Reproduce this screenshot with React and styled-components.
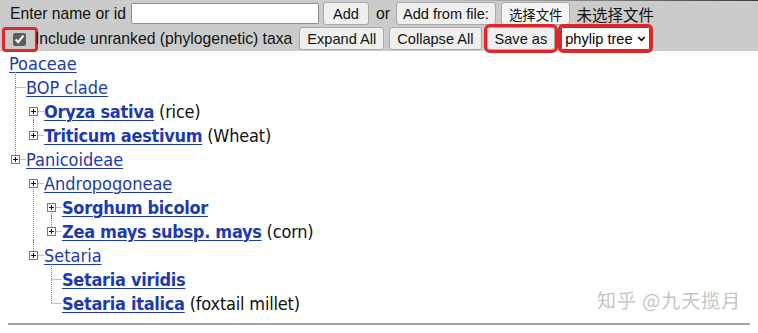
import React from "react";
import styled, { createGlobalStyle } from "styled-components";

const GlobalStyle = createGlobalStyle`
  body {
    margin: 0;
    background: #fff;
    font-family: "Liberation Sans", Arial, sans-serif;
  }
`;

const tree = {
  label: "Poaceae",
  children: [
    {
      label: "BOP clade",
      children: [
        { label: "Oryza sativa", note: "(rice)", bold: true, toggle: true },
        { label: "Triticum aestivum", note: "(Wheat)", bold: true, toggle: true },
      ],
    },
    {
      label: "Panicoideae",
      toggle: true,
      children: [
        {
          label: "Andropogoneae",
          toggle: true,
          children: [
            { label: "Sorghum bicolor", bold: true, toggle: true },
            { label: "Zea mays subsp. mays", note: "(corn)", bold: true, toggle: true },
          ],
        },
        {
          label: "Setaria",
          toggle: true,
          children: [
            { label: "Setaria viridis", bold: true },
            { label: "Setaria italica", note: "(foxtail millet)", bold: true },
          ],
        },
      ],
    },
  ],
};

function App() {
  return (
    <Page>
      <GlobalStyle />
      <Toolbar>
        <ToolRow>
          <Label $ml={10}>Enter name or id</Label>
          <TextInput $ml={5} />
          <Button $ml={4} $pad={9}>Add</Button>
          <Label $ml={7}>or</Label>
          <Button $ml={6} $pad={6}>Add from file:</Button>
          <Button $ml={5} $cjk>选择文件</Button>
          <Label $ml={6} $cjk>未选择文件</Label>
        </ToolRow>
        <ToolRow>
          <CheckWrap $marked>
            <Check type="checkbox" defaultChecked />
          </CheckWrap>
          <Label $ml={0}>Include unranked (phylogenetic) taxa</Label>
          <Button $ml={7}>Expand All</Button>
          <Button $ml={5}>Collapse All</Button>
          <Button $ml={5} $marked>Save as</Button>
          <SelectBox $ml={6} $marked>
            <Select defaultValue="phylip">
              <option value="phylip">phylip tree</option>
              <option value="newick">newick tree</option>
            </Select>
            <svg width="11" height="8" viewBox="0 0 11 8">
              <path d="M1.5 1.5l4 4 4-4" fill="none" stroke="#000" strokeWidth="2" />
            </svg>
          </SelectBox>
        </ToolRow>
      </Toolbar>

      <Tree>
        <RootRow>
          <Link>{tree.label}</Link>
        </RootRow>
        <Branch>
          {tree.children.map((node, i) => (
            <Node key={node.label} node={node} last={i === tree.children.length - 1} first={i === 0} />
          ))}
        </Branch>
      </Tree>

      <Rule />
      <Watermark>知乎 @九天揽月</Watermark>
    </Page>
  );
}

function Node({ node, first, last }) {
  return (
    <Item $last={last} $fromMid={first && node.toggle}>
      <Row>
        <Gutter toggle={node.toggle} />
        <Link $bold={node.bold}>{node.label}</Link>
        {node.note && <Note>{node.note}</Note>}
      </Row>
      {node.children && (
        <Branch $indent>
          {node.children.map((child, i) => (
            <Node
              key={child.label}
              node={child}
              first={i === 0}
              last={i === node.children.length - 1}
            />
          ))}
        </Branch>
      )}
    </Item>
  );
}

function Gutter({ toggle }) {
  return (
    <GutterSvg width="18" height="24" viewBox="0 0 18 24">
      <line x1="7.5" y1="12.5" x2="18" y2="12.5" stroke="#808080" strokeDasharray="1 1" />
      {toggle && (
        <>
          <rect x="3.5" y="8.5" width="8" height="8" fill="#fff" stroke="#7a7a7a" />
          <path d="M5 12.5h5M7.5 10v5" stroke="#111" />
        </>
      )}
    </GutterSvg>
  );
}

export default App;

const Page = styled.div`
  position: relative;
  width: 758px;
  height: 333px;
  overflow: hidden;
`;

const Toolbar = styled.div`
  background:
    linear-gradient(to right, #cbcbcb 55%, #3a3a3a) top / 100% 1px no-repeat,
    #cbcbcb;
  padding: 2px 0 2px;
  height: 47px;
  display: flex;
  flex-direction: column;
  gap: 2px;
`;

const ToolRow = styled.div`
  display: flex;
  align-items: center;
  height: 23px;
  white-space: nowrap;
`;

const Label = styled.span`
  margin-left: ${(p) => p.$ml}px;
  font-family: ${(p) =>
    p.$cjk
      ? `"Noto Sans CJK SC", sans-serif`
      : `"Liberation Sans", Arial, sans-serif`};
  font-size: ${(p) => (p.$cjk ? "15.5px" : "15.7px")};
  color: #111;
`;

const TextInput = styled.input`
  margin-left: ${(p) => p.$ml}px;
  width: 188px;
  height: 21px;
  box-sizing: border-box;
  border: 1px solid #8d8d8d;
  border-radius: 2px;
  background: #fff;
  padding: 0 3px;
`;

const Button = styled.button`
  margin-left: ${(p) => p.$ml}px;
  height: 23px;
  padding: 0 ${(p) => p.$pad ?? 7}px;
  font-family: ${(p) =>
    p.$cjk
      ? `"Noto Sans CJK SC", sans-serif`
      : `"Liberation Sans", Arial, sans-serif`};
  font-size: ${(p) => (p.$cjk ? "13.4px" : "14.6px")};
  color: #111;
  background: ${(p) => (p.$cjk ? "#f4f4f4" : "#efefef")};
  border: 1px solid #a9a9a9;
  border-radius: 3px;
  outline: ${(p) => (p.$marked ? "3px solid #e0262b" : "none")};
  outline-offset: 0;
`;

const CheckWrap = styled.span`
  margin-left: 5px;
  width: 30px;
  height: 19px;
  display: flex;
  align-items: center;
  padding-left: 8px;
  box-sizing: border-box;
  outline: ${(p) => (p.$marked ? "3px solid #e0262b" : "none")};
  border-radius: 1px;
  margin-top: 1px;
`;

const Check = styled.input`
  margin: 0;
  width: 13px;
  height: 13px;
  accent-color: #5c5c5c;
`;

const SelectBox = styled.div`
  margin-left: ${(p) => p.$ml}px;
  width: 89px;
  height: 23px;
  box-sizing: border-box;
  display: flex;
  align-items: center;
  gap: 2px;
  background: #fff;
  border: 1px solid #555;
  border-radius: 2px;
  outline: ${(p) => (p.$marked ? "3px solid #e0262b" : "none")};
  padding-right: 3px;
`;

const Select = styled.select`
  appearance: none;
  border: none;
  background: transparent;
  font-family: "Liberation Sans", Arial, sans-serif;
  font-size: 14.6px;
  color: #000;
  padding: 0 0 0 3px;
  width: 73px;
  outline: none;
`;

const Tree = styled.div`
  padding: 0 0 0 8px;
  font-family: "DejaVu Sans Condensed", "DejaVu Sans", sans-serif;
  font-stretch: condensed;
  font-size: 18px;
`;

const RootRow = styled.div`
  height: 24px;
  display: flex;
  align-items: center;
  padding-left: 1px;
`;

const Branch = styled.ul`
  list-style: none;
  margin: 0 0 0 ${(p) => (p.$indent ? 18 : 0)}px;
  padding: 0;
`;

const Item = styled.li`
  position: relative;
  &::before {
    content: "";
    position: absolute;
    left: 7px;
    width: 1px;
    top: ${(p) => (p.$fromMid ? "12px" : "-3px")};
    ${(p) => (p.$last ? "height: " + (p.$fromMid ? 0 : 15) + "px;" : "bottom: 0;")}
    background: repeating-linear-gradient(to bottom, #808080 0 1px, transparent 1px 2px);
  }
`;

const Row = styled.div`
  position: relative;
  height: 24px;
  display: flex;
  align-items: center;
  white-space: nowrap;
`;

const GutterSvg = styled.svg`
  flex: none;
  display: block;
`;

const Link = styled.a`
  color: #1d3aae;
  text-decoration: underline;
  text-decoration-thickness: 1px;
  text-underline-offset: 2px;
  font-weight: ${(p) => (p.$bold ? 700 : 400)};
  letter-spacing: ${(p) => (p.$bold ? "-0.3px" : "0")};
  cursor: pointer;
`;

const Note = styled.span`
  margin-left: 5px;
  color: #111;
  letter-spacing: -0.2px;
`;

const Rule = styled.hr`
  margin: 8px 8px 0;
  border: none;
  border-top: 2px solid #a2a2a2;
`;

const Watermark = styled.div`
  position: absolute;
  left: 597px;
  top: 286px;
  font-family: "Noto Sans CJK SC", sans-serif;
  font-size: 19px;
  color: #c4c4c4;
  letter-spacing: 1px;
`;
